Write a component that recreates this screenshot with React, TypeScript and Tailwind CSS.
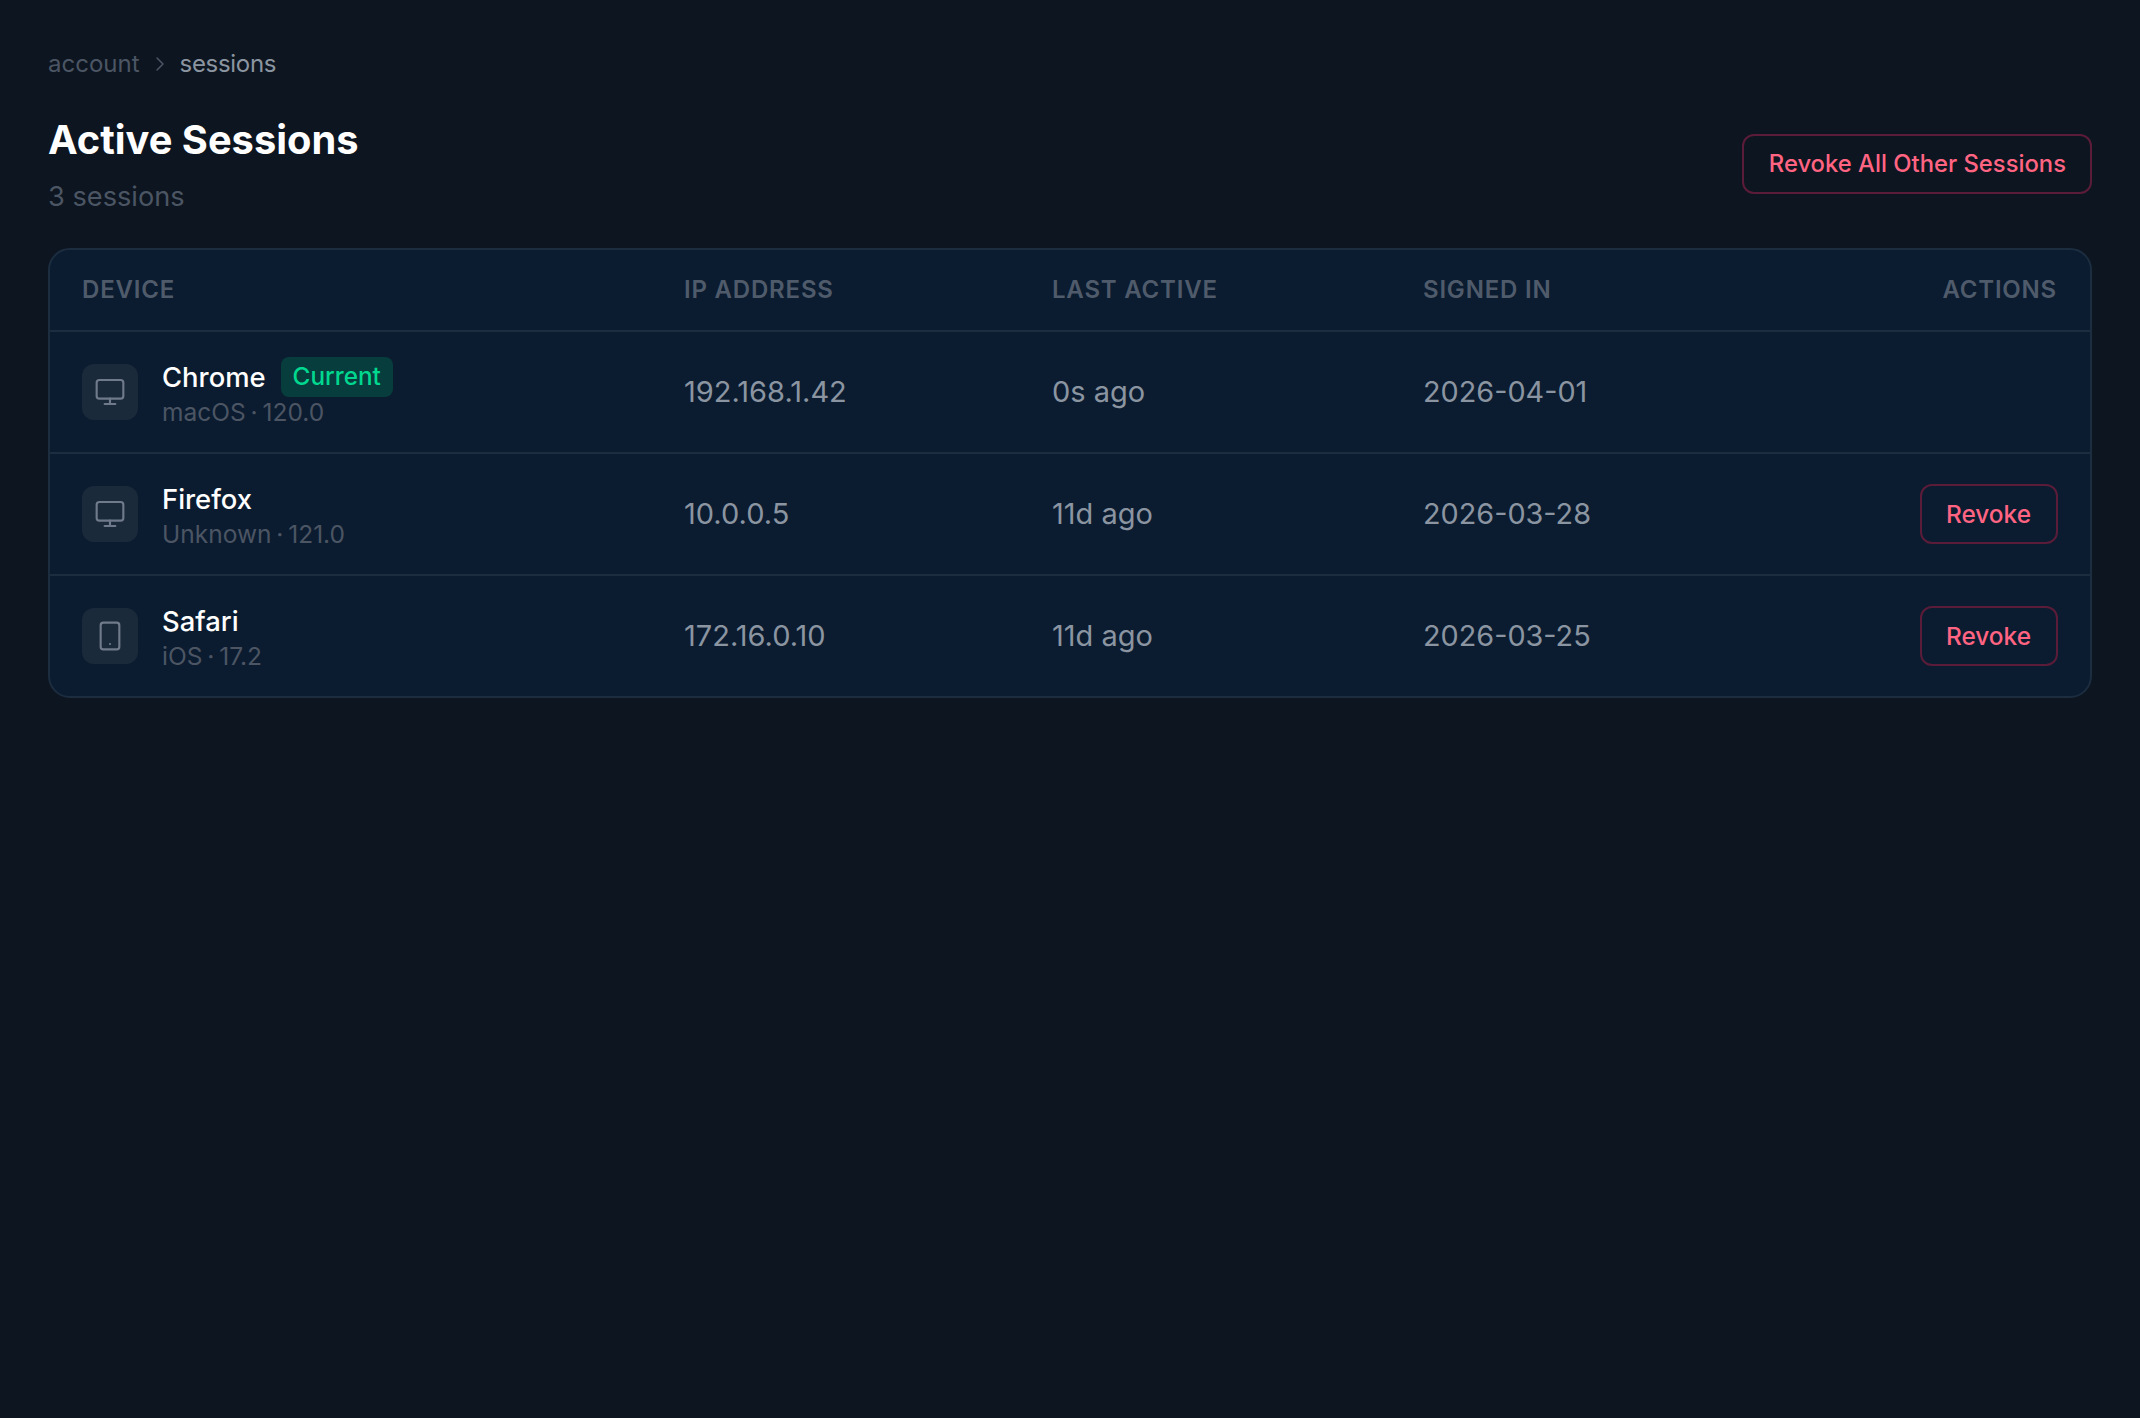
import React from 'react';
import { ChevronRight, Monitor, Smartphone } from 'lucide-react';

const sessions = [
  { name: 'Chrome', meta: 'macOS · 120.0', ip: '192.168.1.42', active: '0s ago', signed: '2026-04-01', icon: Monitor, current: true },
  { name: 'Firefox', meta: 'Unknown · 121.0', ip: '10.0.0.5', active: '11d ago', signed: '2026-03-28', icon: Monitor, current: false },
  { name: 'Safari', meta: 'iOS · 17.2', ip: '172.16.0.10', active: '11d ago', signed: '2026-03-25', icon: Smartphone, current: false },
];

const gridCols = 'grid grid-cols-[601px_368px_371px_1fr] items-center';

const App: React.FC = () => {
  return (
    <div className="min-h-[1418px] bg-[#0d1520] px-[48px] pt-[46px] font-['Inter',sans-serif]">
      {/* Breadcrumb */}
      <div className="flex items-center text-[24px] leading-[36px]">
        <span className="text-[#4b5563]">account</span>
        <ChevronRight className="mx-[8px] h-[24px] w-[24px] text-[#4b5563]" strokeWidth={1.5} />
        <span className="tracking-[-0.3px] text-[#8b95a1]">sessions</span>
      </div>

      {/* Header */}
      <div className="mt-[32px] flex items-start justify-between">
        <div>
          <h1 className="text-[39.8px] leading-[52px] font-bold text-white">Active Sessions</h1>
          <p className="mt-[11px] text-[27.2px] leading-[40px] text-[#4b5563]">3 sessions</p>
        </div>
        <button className="mt-[20px] h-[60px] rounded-[12px] border-2 border-[#5a1c38] pr-[24px] pl-[25px] text-[23.8px] font-[450] text-[#ff6482]">
          Revoke All Other Sessions
        </button>
      </div>

      {/* Table */}
      <div className="mt-[31px] overflow-hidden rounded-[22px] border-2 border-[#1c2d40] bg-[#0b1c30]">
        <div className={`${gridCols} h-[82px] border-b-2 border-[#1c2d40] text-[24px] font-semibold tracking-[0.8px] text-[#4f5b6b]`}>
          <div className="pl-[32px]">DEVICE</div>
          <div className="pl-[33px]">IP ADDRESS</div>
          <div className="pl-[33px]">LAST ACTIVE</div>
          <div className="flex justify-between pr-[33px] pl-[33px]">
            <span>SIGNED IN</span>
            <span>ACTIONS</span>
          </div>
        </div>
        {sessions.map((session, index) => {
          const IconComponent = session.icon;
          const isLast = index === sessions.length - 1;
          return (
            <div
              key={session.name}
              className={`${gridCols} ${isLast ? 'h-[120px]' : 'h-[122px] border-b-2 border-[#1c2d40]'}`}
            >
              <div className="flex items-center pl-[32px]">
                <div className="flex h-[56px] w-[56px] items-center justify-center rounded-[12px] bg-[#1b2a3b]">
                  <IconComponent className="h-[32px] w-[32px] text-[#6f7a8a]" strokeWidth={1.6} />
                </div>
                <div className="ml-[24px]">
                  <div className="flex items-center">
                    <span className="text-[27.4px] leading-[40px] font-medium text-white">{session.name}</span>
                    {session.current && (
                      <span className="ml-[15px] flex h-[40px] items-center rounded-[8px] bg-[#073d3c] px-[12px] text-[24.3px] font-medium text-[#00d890]">
                        Current
                      </span>
                    )}
                  </div>
                  <div className="text-[24.5px] leading-[31px] [word-spacing:-2px] text-[#4b5563]">{session.meta}</div>
                </div>
              </div>
              <div className="pl-[33px] text-[29px] text-[#8b95a1]">{session.ip}</div>
              <div className="pl-[33px] text-[29px] text-[#8b95a1]">{session.active}</div>
              <div className="flex items-center justify-between pr-[32px] pl-[33px]">
                <span className="text-[28.8px] text-[#8b95a1]">{session.signed}</span>
                {!session.current && (
                  <button className="h-[60px] rounded-[12px] border-2 border-[#5a1c38] pr-[25px] pl-[24px] text-[24.4px] font-[450] text-[#ff6482]">
                    Revoke
                  </button>
                )}
              </div>
            </div>
          );
        })}
      </div>
    </div>
  );
};

export default App;
